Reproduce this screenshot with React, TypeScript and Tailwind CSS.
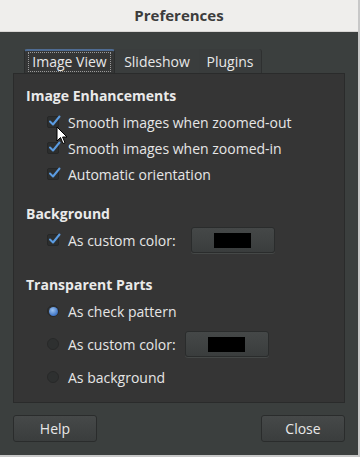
import React from 'react'

const font = { fontFamily: '"Open Sans", "Noto Sans", sans-serif' }

const Check = () => (
  <span className="relative w-[12px] h-[12px] rounded-[2px] bg-[#2c2e2e] border border-[#262727] shrink-0">
    <svg className="absolute left-[0px] top-[-2px]" width="13" height="12" viewBox="0 0 13 12">
      <path d="M2 6.5 L5 9.5 L11.5 1.5" fill="none" stroke="#5b9be0" strokeWidth="2" strokeLinecap="round" strokeLinejoin="round" />
    </svg>
  </span>
)

const Radio = ({ on }: { on?: boolean }) => (
  <span className="w-[12px] h-[12px] rounded-full bg-[#2e3030] border border-[#282929] shrink-0 flex items-center justify-center">
    {on && <span className="w-[9px] h-[9px] rounded-full bg-[radial-gradient(circle_at_40%_35%,#9cc3f0,#3e74c6_70%)]" />}
  </span>
)

const ColorButton = () => (
  <div className="w-[84px] h-[26px] rounded-[3px] border border-[#2a2c2c] bg-[linear-gradient(#454848,#3a3d3d)] flex items-center justify-center shadow-[0_1px_0_#454847]">
    <div className="w-[37px] h-[15px] bg-black" />
  </div>
)

const Row = ({ box, label, children }: { box: React.ReactNode; label: string; children?: React.ReactNode }) => (
  <div className="flex items-center h-[26px] pl-[33px]">
    {box}
    <span className="ml-[9px] text-[14px] text-[#e6e6e6]">{label}</span>
    {children}
  </div>
)

export default function App() {
  return (
    <div className="w-[360px] h-[457px] bg-[#3b3f3e] relative flex flex-col border-r-2 border-b-2 border-[#c8c8c8]" style={font}>
      {/* Title bar */}
      <div className="h-[32px] bg-[#efeeec] border-b border-[#d8d6d4] flex items-center justify-center shrink-0">
        <span className="text-[15px] font-bold text-[#3c3c3c]">Preferences</span>
      </div>

      {/* Tabs */}
      <div className="flex pl-[24px] mt-[17px] h-[24px] shrink-0">
        <div className="w-[91px] bg-[#353636] border-t-2 border-[#4f6c93] border-x border-x-[#2b2d2d] rounded-t-[3px] flex items-center justify-center">
          <span className="text-[14px] text-[#e8e8e8] border border-dotted border-[#9a9a9a] px-[3px] leading-[18px]">Image View</span>
        </div>
        <div className="w-[84px] bg-[#3a3d3d] flex items-center justify-center text-[14px] text-[#e8e8e8]">Slideshow</div>
        <div className="w-[63px] bg-[#393c3c] border-r border-[#2e3030] rounded-tr-[3px] flex items-center justify-center text-[14px] text-[#e8e8e8]">Plugins</div>
      </div>

      {/* Panel */}
      <div className="mx-[13px] h-[330px] bg-[#353535] border border-[#2a2b2b] shrink-0 pt-[12px]">
        <div className="pl-[12px] text-[14px] font-bold text-[#eaeaea] h-[20px] leading-[20px]">Image Enhancements</div>
        <div className="mt-[3px]">
          <Row box={<Check />} label="Smooth images when zoomed-out" />
          <Row box={<Check />} label="Smooth images when zoomed-in" />
          <Row box={<Check />} label="Automatic orientation" />
        </div>
        <div className="pl-[12px] mt-[17px] text-[14px] font-bold text-[#eaeaea] h-[20px] leading-[20px]">Background</div>
        <div className="mt-[3px]">
          <Row box={<Check />} label="As custom color:">
            <div className="ml-[15px]"><ColorButton /></div>
          </Row>
        </div>
        <div className="pl-[12px] mt-[22px] text-[14px] font-bold text-[#eaeaea] h-[20px] leading-[20px]">Transparent Parts</div>
        <div className="mt-[3px] flex flex-col gap-[7px]">
          <Row box={<Radio on />} label="As check pattern" />
          <Row box={<Radio />} label="As custom color:">
            <div className="ml-[9px]"><ColorButton /></div>
          </Row>
          <Row box={<Radio />} label="As background" />
        </div>
      </div>

      {/* Buttons */}
      <div className="flex justify-between px-[13px] mt-[12px]">
        <button className="w-[84px] h-[27px] rounded-[3px] border border-[#2a2c2c] bg-[linear-gradient(#464949,#3a3d3d)] text-[14px] text-[#e8e8e8]">Help</button>
        <button className="w-[84px] h-[27px] rounded-[3px] border border-[#2a2c2c] bg-[linear-gradient(#464949,#3a3d3d)] text-[14px] text-[#e8e8e8]">Close</button>
      </div>

      {/* mouse cursor */}
      <svg className="absolute left-[56px] top-[126px]" width="12" height="19" viewBox="0 0 12 19">
        <path d="M1 1 L1 15 L4.5 11.5 L7 17.5 L9 16.7 L6.6 11 L11 11 Z" fill="#ffffff" stroke="#000000" strokeWidth="1" strokeLinejoin="round" />
      </svg>
    </div>
  )
}
